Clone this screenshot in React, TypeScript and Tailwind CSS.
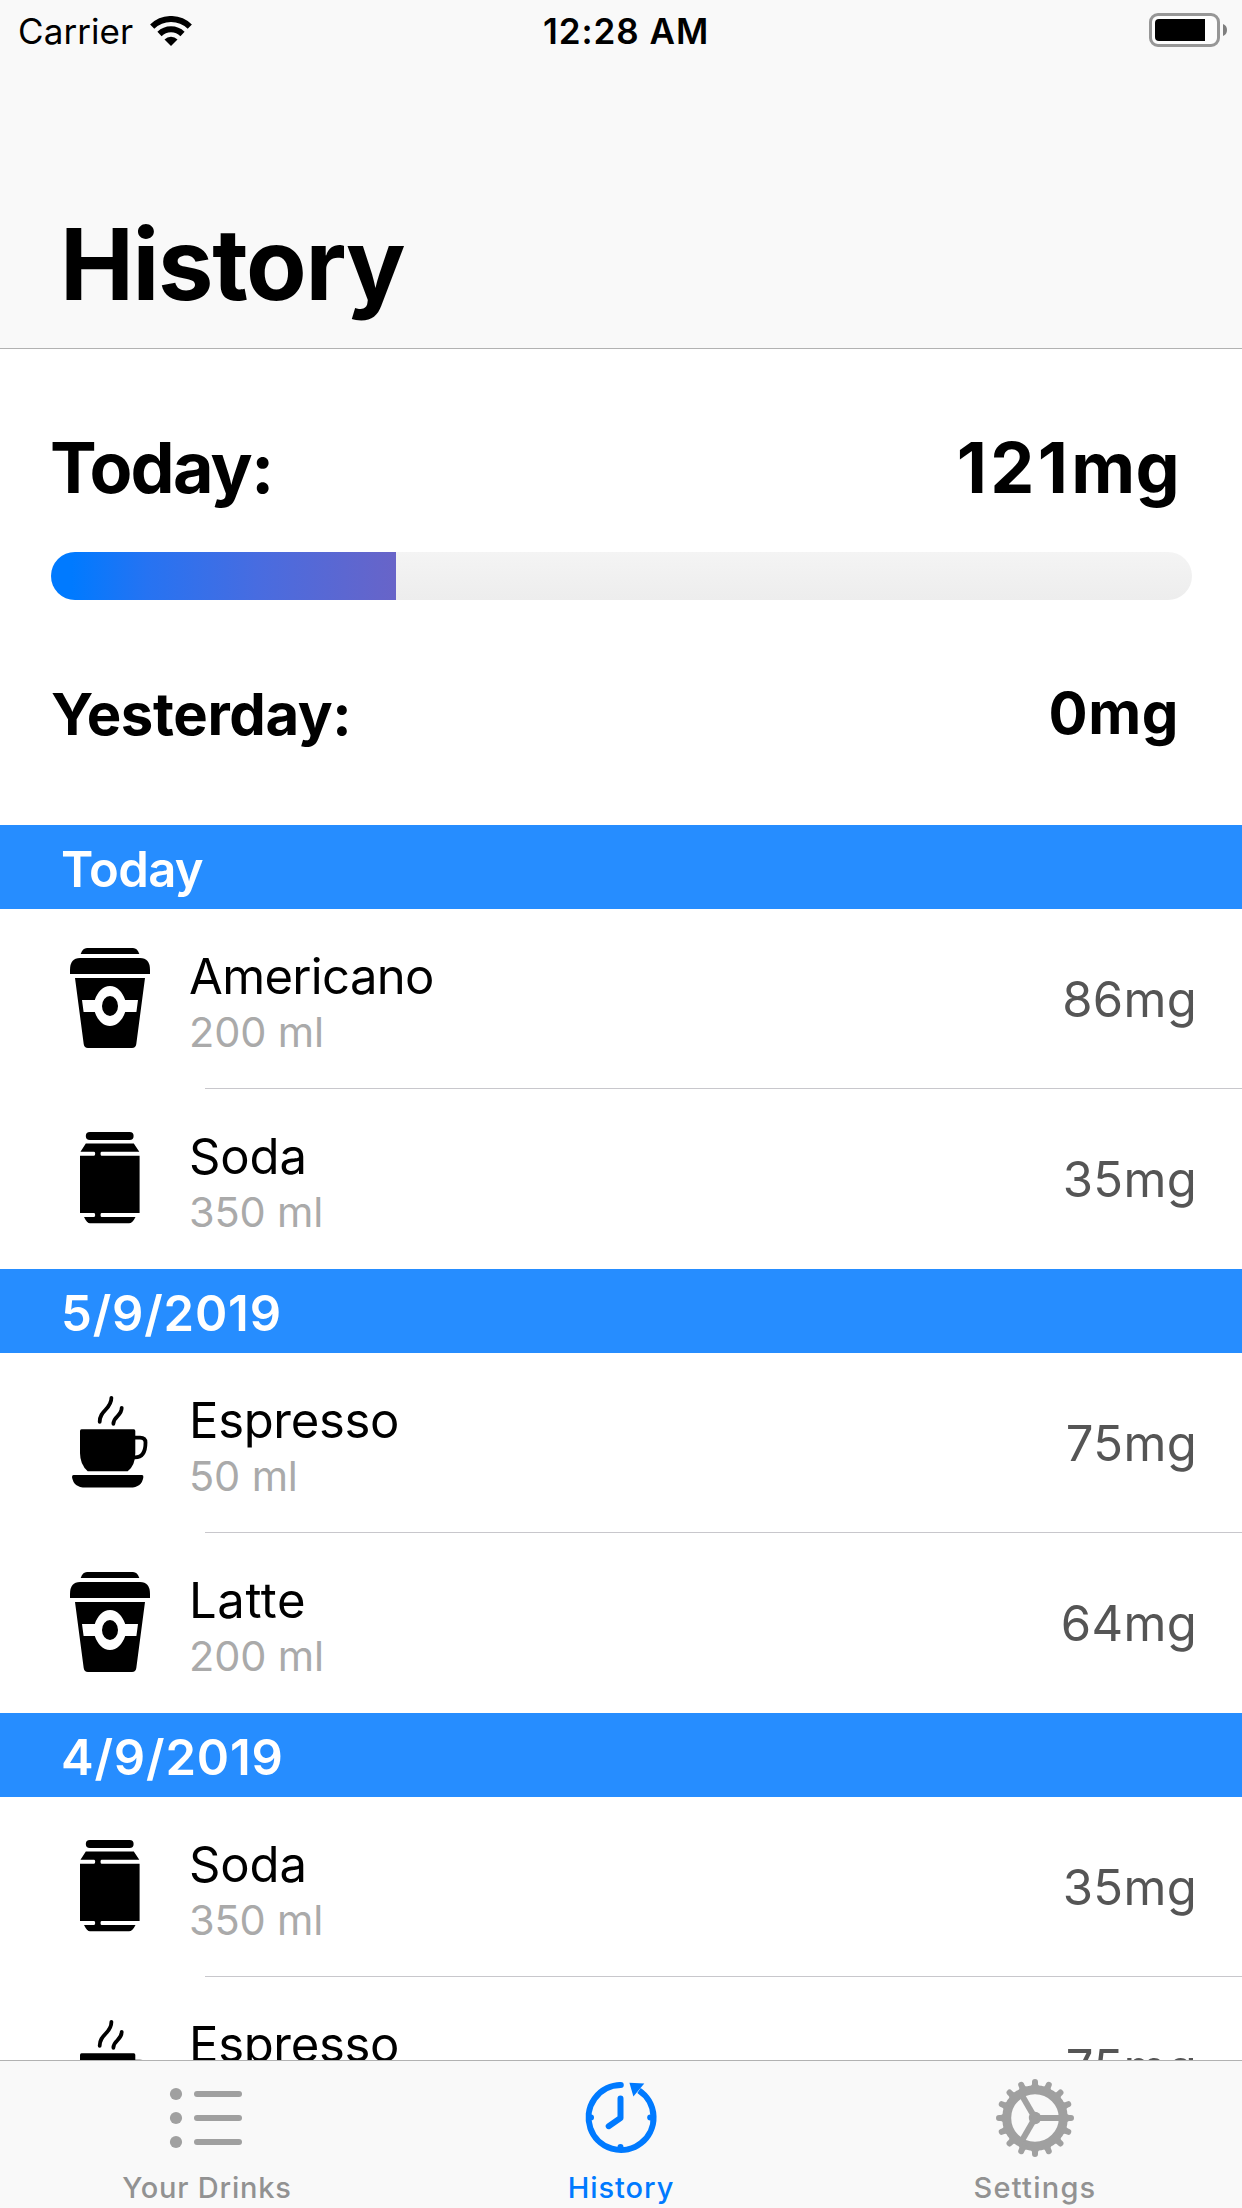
import type { ReactNode } from 'react';

type DrinkKind = 'takeaway' | 'can' | 'cup';

interface Drink {
  kind: DrinkKind;
  name: string;
  volume: string;
  caffeine: string;
}

interface Section {
  title: string;
  titleClass: string;
  drinks: Drink[];
}

const americano: Drink = { kind: 'takeaway', name: 'Americano', volume: '200 ml', caffeine: '86mg' };
const soda: Drink = { kind: 'can', name: 'Soda', volume: '350 ml', caffeine: '35mg' };
const espresso: Drink = { kind: 'cup', name: 'Espresso', volume: '50 ml', caffeine: '75mg' };
const latte: Drink = { kind: 'takeaway', name: 'Latte', volume: '200 ml', caffeine: '64mg' };

const sections: Section[] = [
  { title: 'Today', titleClass: 'tracking-[-0.6px]', drinks: [americano, soda] },
  { title: '5/9/2019', titleClass: 'tracking-[0.83px]', drinks: [espresso, latte] },
  { title: '4/9/2019', titleClass: 'tracking-[0.83px]', drinks: [soda, espresso] },
];

const nameTracking: Record<string, string> = {
  Americano: 'tracking-[-0.66px]',
  Espresso: 'tracking-[-0.32px]',
  Soda: 'tracking-[-0.1px]',
  Latte: 'tracking-[0.6px]',
};

function WifiIcon() {
  return (
    <svg className="h-[30px] w-[42px]" viewBox="0 0 42 30">
      <g fill="none" stroke="#000" strokeWidth="6">
        <path d="M2.2 10.6A27 27 0 0 1 39.8 10.6" />
        <path d="M9.5 18A16.5 16.5 0 0 1 32.5 18" />
      </g>
      <path d="M21 30L14.5 23.4A9.3 9.3 0 0 1 27.5 23.4Z" />
    </svg>
  );
}

function BatteryIcon() {
  return (
    <svg className="h-[34px] w-[78px]" viewBox="0 0 78 34">
      <rect x="1.5" y="1.5" width="68" height="31" rx="7.5" fill="#fff" fillOpacity=".6" stroke="#979797" strokeWidth="3" />
      <path d="M10 6H56V28H10Q6 28 6 24V10Q6 6 10 6Z" />
      <path d="M74 11Q78 12.5 78 17T74 23Z" fill="#7f7f7f" />
    </svg>
  );
}

function DrinkIcon({ kind }: { kind: DrinkKind }) {
  return (
    <svg className="h-[100px] w-[80px]" viewBox="0 0 80 100">
      {kind === 'takeaway' && (
        <>
          <path d="M10.7 6Q12.5 0 17 0H63Q67.5 0 69.3 6Z" />
          <path d="M0 26V22Q0 10 10 10H70Q80 10 80 22V26Z" />
          <path
            fillRule="evenodd"
            d="M5 30H75L66.3 96Q65.8 100 62 100H18Q14.2 100 13.7 96ZM12 52L13.6 64H24.8C27.5 72 33 78 40 78S52.5 72 55.2 64H66.4L68 52H55.2C52.5 44 47 38 40 38S27.5 44 24.8 52Z"
          />
          <ellipse cx="40" cy="58" rx="8" ry="10" />
        </>
      )}
      {kind === 'can' && (
        <>
          <rect x="15.8" y="4" width="47.8" height="8" rx="4" />
          <path d="M15.8 15.5H63.8L69.3 23.7H31.5Q30.5 23.7 30.5 25.7T31.5 27.8H69.6V85H31.5Q30.5 85 30.5 87T31.5 89H65.5Q62.5 95.3 59 95.3H20Q17 95.3 14 89H24Q25.2 89 25.2 87T24 85H10V27.8H24Q25.2 27.8 25.2 25.7T24 23.7H10.5Z" />
        </>
      )}
      {kind === 'cup' && (
        <>
          <g fill="none" stroke="#000" strokeWidth="3.8" strokeLinecap="round">
            <path d="M41.4 5.8C41.5 17.5 29.5 18 29.7 29.8" />
            <path d="M51.7 15.8C51.7 24.5 43.3 24 43.4 31.8" />
            <path d="M65 45.6H70Q75.5 45.6 75.5 50.5C75.5 57 74 65.4 65 65.4" />
          </g>
          <path d="M11.5 37.3H63.8Q65.3 37.3 65.3 39V61Q65.3 73.5 57.7 79.2H17.7Q10 72.5 10 61V39Q10 37.3 11.5 37.3Z" />
          <path d="M3.5 83H72Q73.5 83 73.4 85Q72 95.6 60 95.6H15.5Q3.5 95.6 2 85Q2 83 3.5 83Z" />
        </>
      )}
    </svg>
  );
}

function ListIcon() {
  return (
    <svg className="h-[80px] w-[80px]" viewBox="0 0 80 80" fill="#a0a0a0">
      {[16, 40, 64].map((y) => (
        <g key={y}>
          <circle cx="9" cy={y} r="6.1" />
          <rect x="27" y={y - 3} width="48" height="6" rx="3" />
        </g>
      ))}
    </svg>
  );
}

function HistoryIcon() {
  return (
    <svg className="h-[80px] w-[80px]" viewBox="0 0 80 80">
      <g fill="none" stroke="#007aff" strokeWidth="6" strokeLinecap="round" strokeLinejoin="round">
        <path d="M39.8 7A32.5 32.5 0 1 0 58 12.4" strokeLinecap="butt" />
        <path d="M39.8 7L39.5 7" />
        <path d="M39.5 20.5V40L27.7 48.2" />
      </g>
      <g fill="#007aff">
        <path d="M48.4 4.7L63.3 5.4L52.4 18.4Z" />
        <circle cx="10" cy="39.6" r="3" />
        <circle cx="69.2" cy="39.6" r="3" />
        <circle cx="39.5" cy="69" r="3" />
      </g>
    </svg>
  );
}

const teeth = Array.from({ length: 16 }, (_, i) => i * 22.5);

function GearIcon() {
  return (
    <svg className="h-[80px] w-[80px]" viewBox="0 0 80 80" fill="#a0a0a0">
      <circle cx="40" cy="40" r="28.3" fill="none" stroke="#a0a0a0" strokeWidth="9" />
      {teeth.map((a) => (
        <path
          key={a}
          transform={`rotate(${a} 40 40)`}
          d="M34 8.6Q37 8.2 37 5.5V4A3 3 0 0 1 43 4V5.5Q43 8.2 46 8.6V11H34Z"
        />
      ))}
      <circle cx="40" cy="40" r="6.2" />
      {[0, 120, 240].map((a) => (
        <rect key={a} x="40" y="37" width="26" height="6" transform={`rotate(${a} 40 40)`} />
      ))}
    </svg>
  );
}

function Tab({ icon, label, className }: { icon: ReactNode; label: string; className: string }) {
  return (
    <div className="flex flex-1 flex-col items-center pt-[17px]">
      {icon}
      <span className={`mt-[10px] whitespace-nowrap text-[29px] leading-[40px] font-medium ${className}`}>{label}</span>
    </div>
  );
}

function DrinkRow({ drink, separator }: { drink: Drink; separator: boolean }) {
  return (
    <div className="flex h-[180px] shrink-0 flex-col">
      <div className="flex flex-1 items-start pr-[45px] pl-[70px]">
        <div className="pt-[39px]">
          <DrinkIcon kind={drink.kind} />
        </div>
        <div className="flex flex-1 flex-col pt-[40px] pl-[39px]">
          <span className={`text-[49px] leading-[56px] text-black ${nameTracking[drink.name]}`}>{drink.name}</span>
          <span className="mt-[3px] text-[41.5px] leading-[48px] tracking-[-0.15px] text-[#aaaaaa]">{drink.volume}</span>
        </div>
        <span className="pt-[61px] text-[49px] leading-[60px] tracking-[0.3px] text-[#555555]">{drink.caffeine}</span>
      </div>
      {separator && <div className="ml-[205px] h-px bg-[#c8c7cc]" />}
    </div>
  );
}

export default function App() {
  return (
    <div className="flex h-[2208px] w-[1242px] flex-col overflow-hidden bg-white font-['Inter',sans-serif] text-black">
      <header className="h-[349px] shrink-0 border-b border-[#b2b2b2] bg-[#f9f9f9]">
        <div className="flex h-[62px] items-center pr-[15px]">
          <div className="flex w-[543px] items-center pl-[18px]">
            <span className="w-[132px] text-[35px] leading-[42px] tracking-[0.08px]">Carrier</span>
            <WifiIcon />
          </div>
          <span className="text-[35px] leading-[42px] font-semibold tracking-[0.95px]">12:28 AM</span>
          <div className="ml-auto pb-[2px]">
            <BatteryIcon />
          </div>
        </div>
        <h1 className="mt-[142px] pl-[60px] text-[99px] leading-[120px] font-bold tracking-[-1.35px]">History</h1>
      </header>

      <section className="flex h-[476px] shrink-0 flex-col pt-[79px] pr-[50px] pl-[51px]">
        <div className="flex items-start justify-between pr-[12px] text-[70px] leading-[80px] font-bold">
          <span className="-ml-px tracking-[-1.8px]">Today:</span>
          <span className="tracking-[0.3px]">
            <span className="tracking-[3.4px]">121</span>mg
          </span>
        </div>
        <div className="mt-[44px] h-[48px] shrink-0 overflow-hidden rounded-full bg-linear-to-b from-[#f4f4f4] to-[#ededed]">
          <div className="h-full w-[345px] bg-[linear-gradient(90deg,#007aff_6%,#2673f2_28%,#486ce0_60%,#6864c8_100%)]" />
        </div>
        <div className="mt-[84px] flex items-start justify-between pr-[13px] text-[58px] leading-[60px] font-bold">
          <span className="tracking-[-0.38px]">Yesterday:</span>
          <span className="-mt-px tracking-[0.6px]">0mg</span>
        </div>
      </section>

      <main className="flex min-h-0 flex-1 flex-col overflow-hidden">
        {sections.map((section) => (
          <section key={section.title} className="flex shrink-0 flex-col">
            <h2
              className={`flex h-[84px] items-center bg-[#268dff] pt-[6px] pl-[61px] text-[49px] leading-[60px] font-semibold text-white ${section.titleClass}`}
            >
              {section.title}
            </h2>
            {section.drinks.map((drink, i) => (
              <DrinkRow key={drink.name} drink={drink} separator={i < section.drinks.length - 1} />
            ))}
          </section>
        ))}
      </main>

      <nav className="flex h-[148px] shrink-0 border-t border-[#b2b2b2] bg-[#f9f9f9]">
        <Tab icon={<ListIcon />} label="Your Drinks" className="tracking-[0.8px] text-[#929292]" />
        <Tab icon={<HistoryIcon />} label="History" className="tracking-[0.95px] text-[#007aff]" />
        <Tab icon={<GearIcon />} label="Settings" className="tracking-[1.23px] text-[#929292]" />
      </nav>
    </div>
  );
}
